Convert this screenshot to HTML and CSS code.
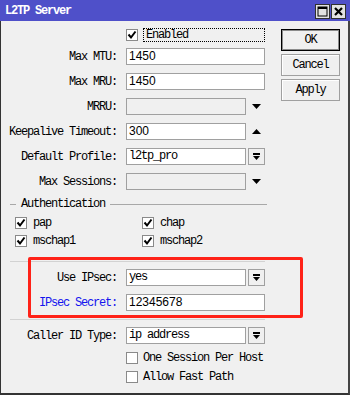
FILE: index.html
```html
<!DOCTYPE html>
<html lang="en">
<head>
    <meta charset="UTF-8">
    <meta name="viewport" content="width=device-width, initial-scale=1.0">
    <title>L2TP Server</title>
    <link rel="stylesheet" href="styles.css">
</head>
<body>
  <div class="window">
    <div class="titlebar">
      <span class="title">L2TP Server</span>
      <div class="win-buttons">
        <span class="win-btn">
          <svg width="11" height="11" viewBox="0 0 11 11"><rect x="1" y="1" width="9" height="9" fill="none" stroke="#000" stroke-width="1"/><rect x="1" y="1" width="9" height="2" fill="#000"/></svg>
        </span>
        <span class="win-btn">
          <svg width="11" height="11" viewBox="0 0 11 11"><path d="M2 2 L9 9 M9 2 L2 9" stroke="#000" stroke-width="2.2"/></svg>
        </span>
      </div>
    </div>

    <div class="content">
      <div class="form">
        <div class="row row-enabled">
          <span></span>
          <div class="control">
            <span class="checkbox checked"><svg width="10" height="10" viewBox="0 0 10 10"><path d="M1.5 4.5 L4 7.5 L8.5 1.5" fill="none" stroke="#000" stroke-width="2"/></svg></span>
            <span class="focus">Enabled</span>
          </div>
        </div>

        <div class="row">
          <label>Max MTU:</label>
          <div class="control"><span class="input num">1450</span></div>
        </div>
        <div class="row">
          <label>Max MRU:</label>
          <div class="control"><span class="input num">1450</span></div>
        </div>
        <div class="row">
          <label>MRRU:</label>
          <div class="control">
            <span class="input short disabled"></span>
            <span class="arrow"><svg width="9" height="5" viewBox="0 0 9 5"><polygon points="0,0 9,0 4.5,5" fill="#000"/></svg></span>
          </div>
        </div>
        <div class="row">
          <label>Keepalive Timeout:</label>
          <div class="control">
            <span class="input short num">300</span>
            <span class="arrow"><svg width="9" height="5" viewBox="0 0 9 5"><polygon points="0,5 9,5 4.5,0" fill="#000"/></svg></span>
          </div>
        </div>
        <div class="row">
          <label>Default Profile:</label>
          <div class="control">
            <span class="input short">l2tp_pro</span>
            <span class="drop-btn"><svg width="9" height="8" viewBox="0 0 9 8"><rect x="1" y="0" width="7" height="2" fill="#000"/><polygon points="1,3 8,3 4.5,7" fill="#000"/></svg></span>
          </div>
        </div>
        <div class="row">
          <label>Max Sessions:</label>
          <div class="control">
            <span class="input short disabled"></span>
            <span class="arrow"><svg width="9" height="5" viewBox="0 0 9 5"><polygon points="0,0 9,0 4.5,5" fill="#000"/></svg></span>
          </div>
        </div>

        <div class="legend">
          <span class="legend-line short-line"></span>
          <span>Authentication</span>
          <span class="legend-line"></span>
        </div>
        <div class="auth-grid">
          <div class="auth-item"><span class="checkbox checked"><svg width="10" height="10" viewBox="0 0 10 10"><path d="M1.5 4.5 L4 7.5 L8.5 1.5" fill="none" stroke="#000" stroke-width="2"/></svg></span>pap</div>
          <div class="auth-item"><span class="checkbox checked"><svg width="10" height="10" viewBox="0 0 10 10"><path d="M1.5 4.5 L4 7.5 L8.5 1.5" fill="none" stroke="#000" stroke-width="2"/></svg></span>chap</div>
          <div class="auth-item"><span class="checkbox checked"><svg width="10" height="10" viewBox="0 0 10 10"><path d="M1.5 4.5 L4 7.5 L8.5 1.5" fill="none" stroke="#000" stroke-width="2"/></svg></span>mschap1</div>
          <div class="auth-item"><span class="checkbox checked"><svg width="10" height="10" viewBox="0 0 10 10"><path d="M1.5 4.5 L4 7.5 L8.5 1.5" fill="none" stroke="#000" stroke-width="2"/></svg></span>mschap2</div>
        </div>

        <div class="separator sep-top"></div>
        <div class="row">
          <label>Use IPsec:</label>
          <div class="control">
            <span class="input short">yes</span>
            <span class="drop-btn"><svg width="9" height="8" viewBox="0 0 9 8"><rect x="1" y="0" width="7" height="2" fill="#000"/><polygon points="1,3 8,3 4.5,7" fill="#000"/></svg></span>
          </div>
        </div>
        <div class="row">
          <label class="blue">IPsec Secret:</label>
          <div class="control"><span class="input num">12345678</span></div>
        </div>
        <div class="separator sep-bottom"></div>

        <div class="row">
          <label>Caller ID Type:</label>
          <div class="control">
            <span class="input short">ip address</span>
            <span class="drop-btn"><svg width="9" height="8" viewBox="0 0 9 8"><rect x="1" y="0" width="7" height="2" fill="#000"/><polygon points="1,3 8,3 4.5,7" fill="#000"/></svg></span>
          </div>
        </div>
        <div class="row row-check">
          <span></span>
          <div class="control"><span class="checkbox"></span><span class="check-label">One Session Per Host</span></div>
        </div>
        <div class="row row-check">
          <span></span>
          <div class="control"><span class="checkbox"></span><span class="check-label">Allow Fast Path</span></div>
        </div>
      </div>

      <div class="actions">
        <button class="btn default">OK</button>
        <button class="btn">Cancel</button>
        <button class="btn">Apply</button>
      </div>
    </div>

    <div class="highlight"></div>
  </div>
</body>
</html>
```

FILE: styles.css
```css
body {
  margin: 0;
  font-family: "Liberation Mono", "DejaVu Sans Mono", monospace;
  font-size: 12px;
  letter-spacing: -1.2px;
  color: #000;
}

.window {
  position: relative;
  width: 350px;
  height: 395px;
  box-sizing: border-box;
  background: #f0f0f0;
  border-left: 1px solid #333;
  border-right: 2px solid #444;
  border-bottom: 2px solid #333;
}

/* title bar */
.titlebar {
  height: 21px;
  margin-left: -1px;
  margin-right: -2px;
  background: #4f50c9;
  display: flex;
  align-items: center;
  justify-content: space-between;
  padding: 0 4px 0 5px;
}
.title {
  color: #fff;
  font-size: 12px;
  font-weight: bold;
  letter-spacing: -1.2px;
}
.win-buttons {
  display: flex;
  gap: 1px;
  margin-top: 2px;
}
.win-btn {
  width: 15px;
  height: 15px;
  box-sizing: border-box;
  background: #e2e2e2;
  border: 1px solid #303030;
  display: flex;
  align-items: center;
  justify-content: center;
}

.content {
  display: flex;
  align-items: flex-start;
}

/* form column */
.form {
  width: 264px;
  padding-top: 5px;
}
.row {
  display: grid;
  grid-template-columns: 117px 139px;
  column-gap: 8px;
  align-items: center;
  height: 25px;
}
.row label {
  text-align: right;
  white-space: nowrap;
  padding-right: 1px;
}
.row-enabled { height: 18px; }
.row-check { height: 19px; }
.control {
  display: flex;
  align-items: center;
  gap: 2px;
}
.input {
  box-sizing: border-box;
  width: 139px;
  height: 17px;
  line-height: 15px;
  background: #fff;
  border: 1px solid #a0a0a0;
  padding-left: 2px;
  white-space: nowrap;
  overflow: hidden;
}
.input.short { width: 120px; }
.input.num {
  font-family: "Liberation Sans", Arial, sans-serif;
  font-size: 12px;
  letter-spacing: 0;
}
.input.disabled { background: #f0f0f0; }
.arrow {
  width: 17px;
  display: flex;
  justify-content: center;
}
.drop-btn {
  box-sizing: border-box;
  width: 17px;
  height: 17px;
  border: 1px solid #a0a0a0;
  background: #f0f0f0;
  display: flex;
  align-items: center;
  justify-content: center;
}

.checkbox {
  box-sizing: border-box;
  width: 12px;
  height: 12px;
  background: #fff;
  border: 1px solid #8a8a8a;
  display: inline-flex;
  align-items: center;
  justify-content: center;
  flex-shrink: 0;
}
.focus {
  box-sizing: border-box;
  margin-left: 3px;
  width: 124px;
  height: 14px;
  line-height: 12px;
  border: 1px dotted #000;
  padding-left: 2px;
}
.check-label { margin-left: 3px; }

/* authentication group */
.legend {
  display: flex;
  align-items: center;
  gap: 5px;
  height: 20px;
  padding-left: 9px;
  margin-right: -2px;
}
.legend-line {
  flex: 1;
  border-top: 1px solid #a8a8a8;
}
.legend-line.short-line { flex: 0 0 6px; }
.auth-grid {
  display: grid;
  grid-template-columns: 127px 1fr;
  padding-left: 14px;
}
.auth-item {
  display: flex;
  align-items: center;
  gap: 6px;
  height: 18px;
}

.separator {
  margin-left: 9px;
  border-top: 1px solid #d2d2d2;
}
.sep-top {
  margin-top: 11px;
  margin-bottom: 3px;
}
.sep-bottom {
  margin-top: 4px;
  margin-bottom: 3px;
}
.blue { color: #1414ee; }

/* buttons column */
.actions {
  margin-left: 16px;
  padding-top: 8px;
  display: flex;
  flex-direction: column;
  gap: 3px;
}
.btn {
  width: 59px;
  height: 22px;
  box-sizing: border-box;
  font-family: "Liberation Mono", "DejaVu Sans Mono", monospace;
  font-size: 12px;
  letter-spacing: -1.2px;
  background: #f0f0f0;
  border: 1px solid #a0a0a0;
  box-shadow: inset 1px 1px 0 #fff;
  padding: 0;
  color: #000;
}
.btn.default {
  border: 1px solid #000;
  box-shadow: inset 0 0 0 1px #8c8c8c;
}

/* annotation box */
.highlight {
  position: absolute;
  left: 27px;
  top: 257px;
  width: 275px;
  height: 61px;
  box-sizing: border-box;
  border: 3px solid #ff2218;
  border-radius: 2px;
}
```
